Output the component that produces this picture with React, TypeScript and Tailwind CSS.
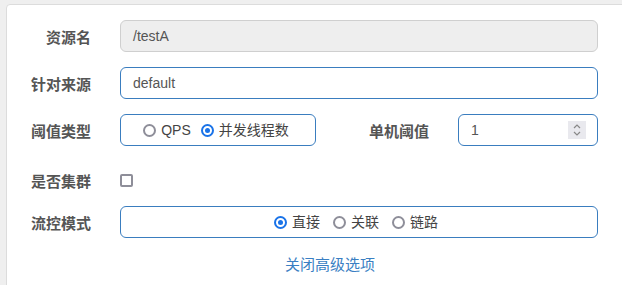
import React from "react";

const font = { fontFamily: '"Liberation Sans", "Noto Sans CJK SC", sans-serif' };

function Radio({ checked, label }: { checked?: boolean; label: string }) {
  return (
    <span className="flex items-center">
      {checked ? (
        <span className="w-[13px] h-[13px] rounded-full border-[2px] border-[#1a73e8] flex items-center justify-center">
          <span className="w-[5px] h-[5px] rounded-full bg-[#1a73e8]" />
        </span>
      ) : (
        <span className="w-[13px] h-[13px] rounded-full border-[2px] border-[#8e8e99]" />
      )}
      <span className="ml-[5px] text-[14px] text-[#444]">{label}</span>
    </span>
  );
}

function Label({ children, w = "w-[84px]" }: { children: React.ReactNode; w?: string }) {
  return (
    <div className={`${w} shrink-0 text-right text-[15px] font-bold text-[#555] relative top-[2px]`}>{children}</div>
  );
}

export default function App() {
  return (
    <div className="w-[622px] h-[285px] bg-[#efefef] overflow-hidden" style={font}>
      <div className="ml-[6px] mt-[4px] w-[640px] h-[300px] bg-white border border-[#dcdcdc] rounded-[4px] pt-[15px]">
        <div className="flex items-center h-8">
          <Label>资源名</Label>
          <div className="ml-[29px] w-[478px] h-8 rounded-[6px] border border-[#cfcfcf] bg-[#eeeeee] flex items-center px-3 text-[14px] text-[#555]">
            /testA
          </div>
        </div>
        <div className="flex items-center h-8 mt-[15px]">
          <Label>针对来源</Label>
          <div className="ml-[29px] w-[478px] h-8 rounded-[6px] border border-[#3a7dbf] bg-white flex items-center px-3 text-[14px] text-[#555]">
            default
          </div>
        </div>
        <div className="flex items-center h-8 mt-[15px]">
          <Label>阈值类型</Label>
          <div className="ml-[29px] w-[196px] h-8 rounded-[6px] border border-[#3a7dbf] flex items-center justify-center gap-[10px] pr-[4px]">
            <Radio label="QPS" />
            <Radio checked label="并发线程数" />
          </div>
          <Label w="w-[113px]">单机阈值</Label>
          <div className="ml-[29px] w-[140px] h-8 rounded-[6px] border border-[#3a7dbf] flex items-center pl-3 pr-[11px] text-[14px] text-[#555]">
            <span className="flex-1">1</span>
            <span className="w-[18px] h-[18px] bg-[#e9e9ee] flex flex-col items-center justify-center">
              <svg width="10" height="14" viewBox="0 0 10 14" fill="none" stroke="#888" strokeWidth="1.2">
                <path d="M2 5 L5 2 L8 5" />
                <path d="M2 9 L5 12 L8 9" />
              </svg>
            </span>
          </div>
        </div>
        <div className="flex items-center h-8 mt-[18px]">
          <Label>是否集群</Label>
          <div className="ml-[29px] w-[13px] h-[13px] rounded-[2px] border-[2px] border-[#8e8e99]" />
        </div>
        <div className="flex items-center h-8 mt-[10px]">
          <Label>流控模式</Label>
          <div className="ml-[29px] w-[478px] h-8 rounded-[6px] border border-[#3a7dbf] flex items-center justify-center gap-[13px] pr-[6px]">
            <Radio checked label="直接" />
            <Radio label="关联" />
            <Radio label="链路" />
          </div>
        </div>
        <div className="w-[616px] text-center mt-[15px]">
          <span className="text-[15px] text-[#3a7fc3] pl-[30px]">关闭高级选项</span>
        </div>
      </div>
    </div>
  );
}
